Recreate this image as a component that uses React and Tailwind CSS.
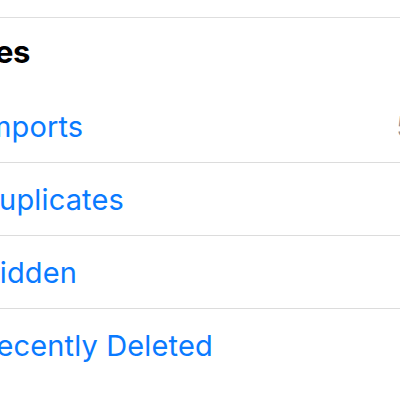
export default function App() {
  const rows = [
    { label: "Imports", count: "5" },
    { label: "Duplicates" },
    { label: "Hidden" },
    { label: "Recently Deleted", last: true },
  ];
  return (
    <div className="w-[400px] h-[400px] bg-white overflow-hidden font-['Inter',sans-serif] antialiased">
      <div className="h-[17px]" />
      <div className="h-px bg-[#dedede]" />
      <div className="h-[72px] pt-[18px]">
        <div className="ml-[-82px] text-[31px] leading-none font-bold text-black tracking-[-0.3px] whitespace-nowrap">
          Utilities
        </div>
      </div>
      {rows.map((r) => (
        <div
          key={r.label}
          className={`h-[73px] flex items-center overflow-hidden ${r.last ? "" : "border-b border-[#dcdcdc]"}`}
        >
          <span className="ml-[-22px] text-[29px] leading-none tracking-[0.15px] text-[#0a7aff] whitespace-nowrap">
            {r.label}
          </span>
          {r.count && (
            <span className="ml-auto mr-[-14px] text-[29px] leading-none text-[#8e8e93] shrink-0">
              {r.count}
            </span>
          )}
        </div>
      ))}
    </div>
  );
}
